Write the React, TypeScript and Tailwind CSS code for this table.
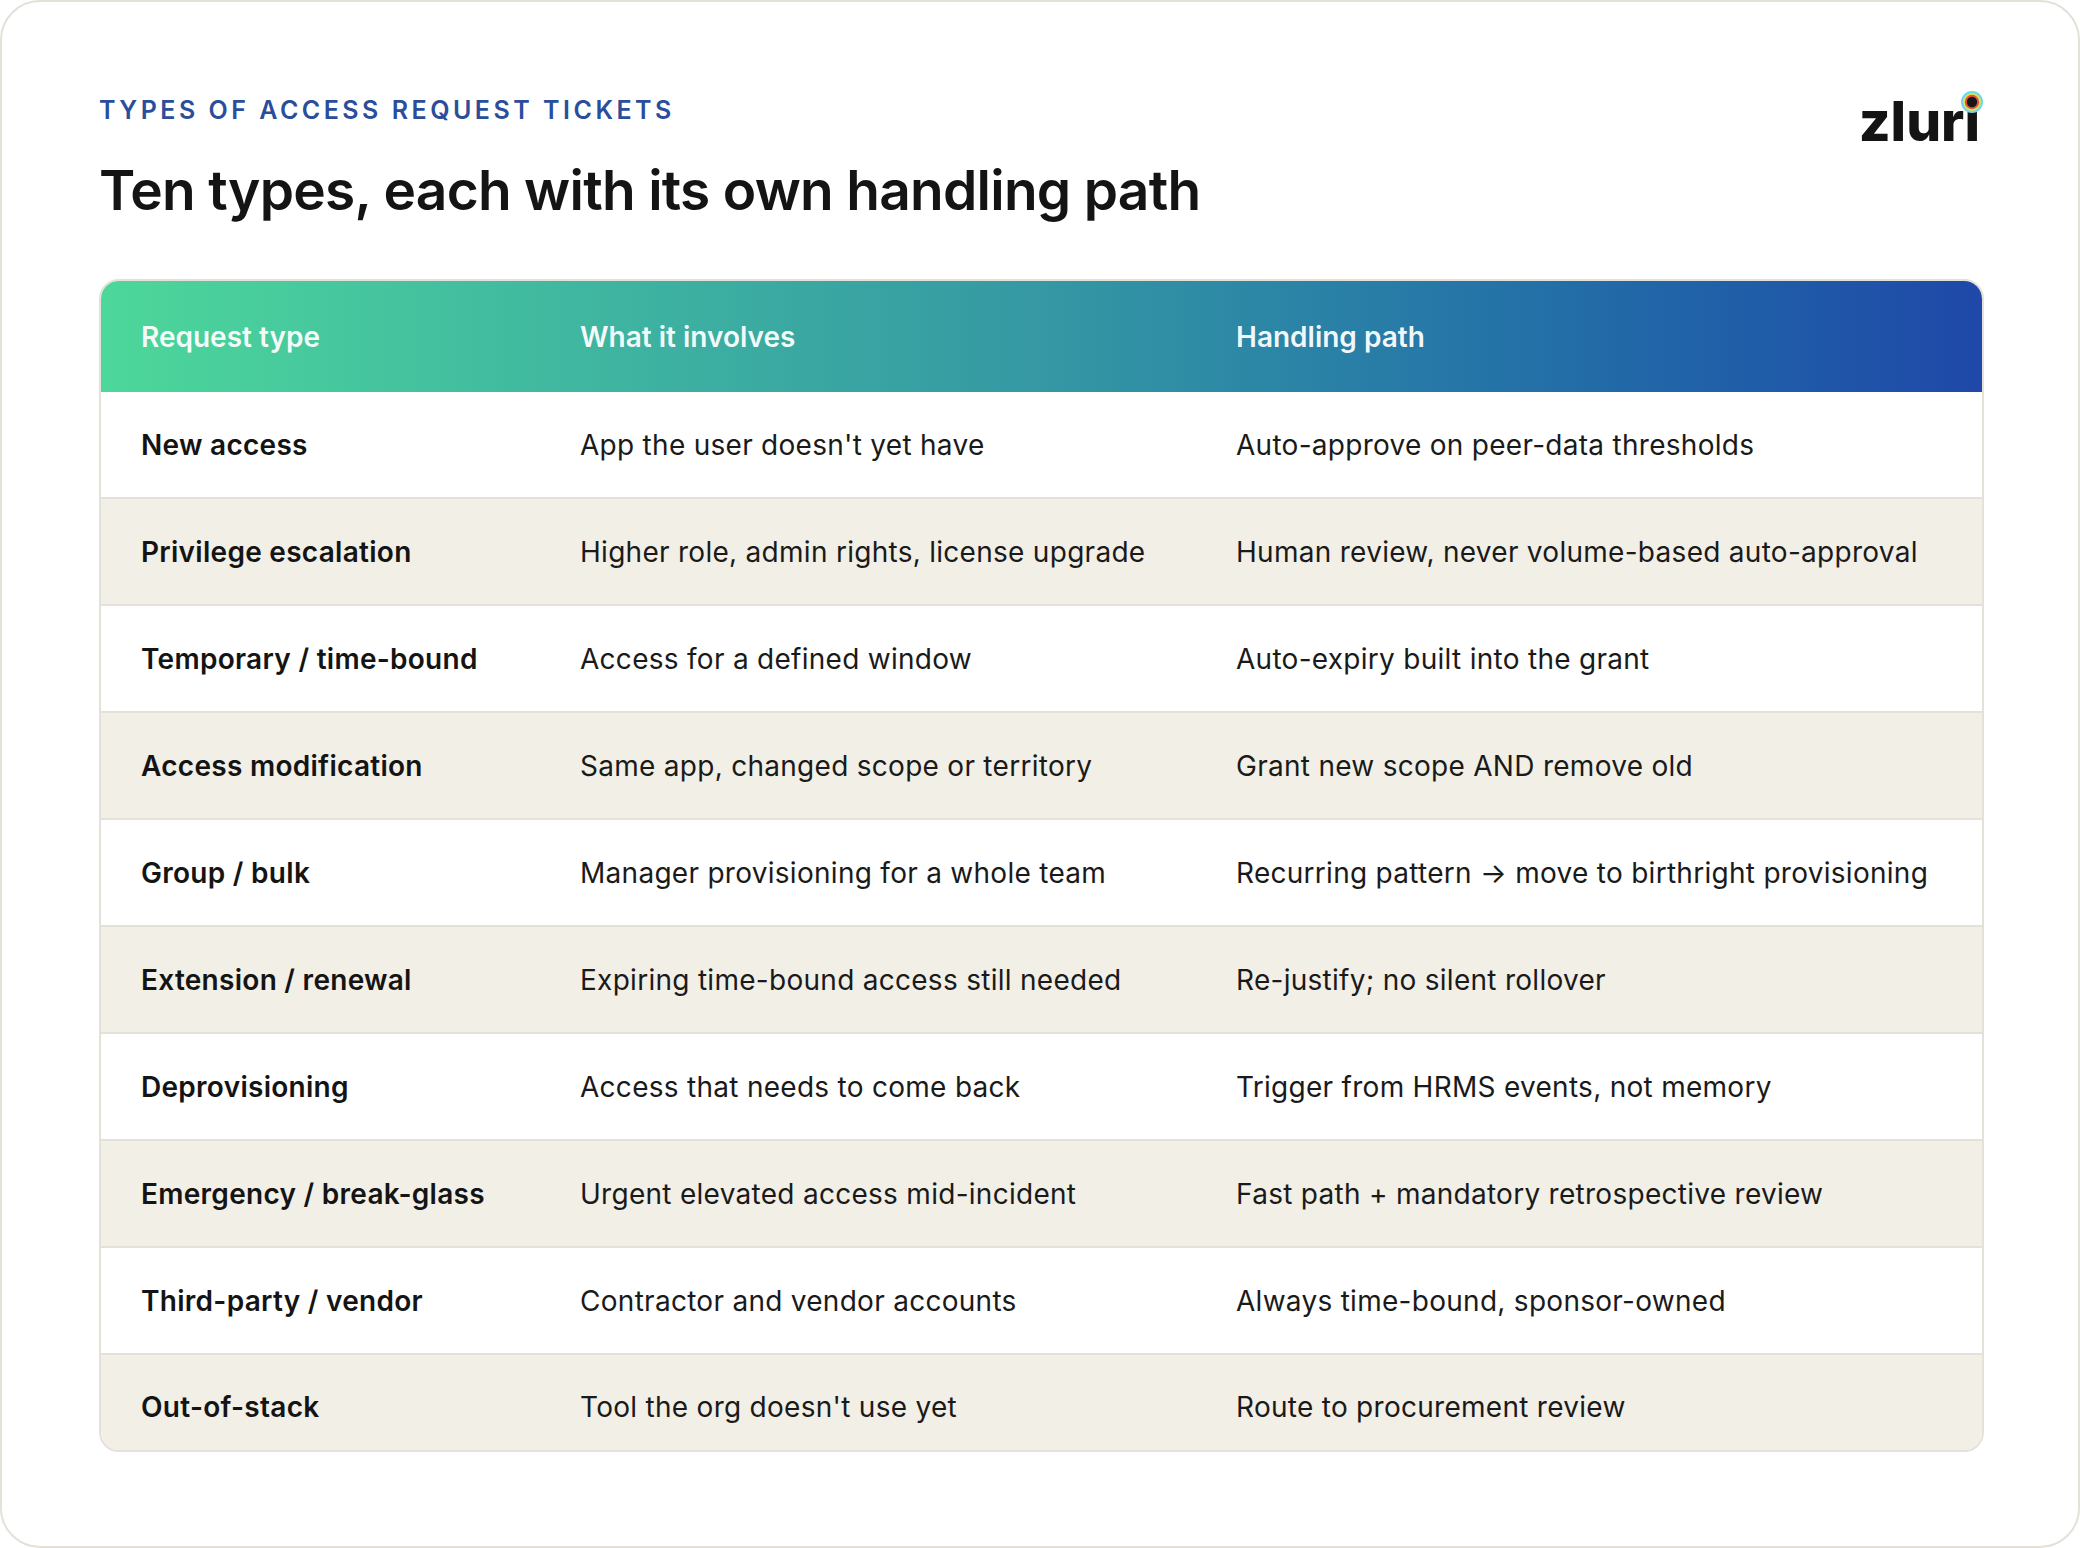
import React from "react";

const rows: [string, string, string][] = [
  ["New access", "App the user doesn't yet have", "Auto-approve on peer-data thresholds"],
  ["Privilege escalation", "Higher role, admin rights, license upgrade", "Human review, never volume-based auto-approval"],
  ["Temporary / time-bound", "Access for a defined window", "Auto-expiry built into the grant"],
  ["Access modification", "Same app, changed scope or territory", "Grant new scope AND remove old"],
  ["Group / bulk", "Manager provisioning for a whole team", "Recurring pattern \u2192 move to birthright provisioning"],
  ["Extension / renewal", "Expiring time-bound access still needed", "Re-justify; no silent rollover"],
  ["Deprovisioning", "Access that needs to come back", "Trigger from HRMS events, not memory"],
  ["Emergency / break-glass", "Urgent elevated access mid-incident", "Fast path + mandatory retrospective review"],
  ["Third-party / vendor", "Contractor and vendor accounts", "Always time-bound, sponsor-owned"],
  ["Out-of-stack", "Tool the org doesn't use yet", "Route to procurement review"],
];

function Logo() {
  return (
    <div className="relative mr-[4px] -mt-[4px] font-['Inter',sans-serif] text-[55px] font-extrabold leading-none tracking-normal text-[#141414]">
      <span>zlur</span>
      <span className="relative">
        {"\u0131"}
        <svg
          className="absolute left-1/2 top-[2px] -translate-x-1/2"
          width="24"
          height="24"
          viewBox="0 0 24 24"
        >
          <defs>
            <filter id="zsoft" x="-20%" y="-20%" width="140%" height="140%">
              <feGaussianBlur stdDeviation="0.45" />
            </filter>
          </defs>
          <g filter="url(#zsoft)">
            <circle cx="12" cy="12" r="11" fill="#71d5ee" />
            <circle cx="12" cy="12" r="9" fill="#cfe85c" />
            <circle cx="12" cy="12" r="7.2" fill="#ee4c3d" />
            <circle cx="12" cy="12" r="5.2" fill="#161616" />
          </g>
        </svg>
      </span>
    </div>
  );
}

export default function App() {
  return (
    <div className="h-[1548px] w-[2080px] bg-white font-['Inter',sans-serif]">
      <div className="flex h-full flex-col rounded-[40px] border-2 border-[#e4e1d9] bg-white pl-[97px] pr-[94px] pt-[96px]">
        <div className="flex items-start justify-between">
          <div className="flex flex-col">
            <div className="text-[25px] font-semibold uppercase leading-none tracking-[0.14em] text-[#2a4d9c]">
              Types of access request tickets
            </div>
            <h1 className="mt-[40px] text-[55px] font-semibold leading-none tracking-[-0.013em] text-[#141414]">
              Ten types, each with its own handling path
            </h1>
          </div>
          <Logo />
        </div>

        <div className="mt-[61px] overflow-hidden rounded-[20px] border-2 border-[#e4e1d9]">
          <div className="grid h-[111px] grid-cols-[439px_656px_1fr] items-center bg-linear-to-r from-[#4dd79a] via-[#3598a3] to-[#1f48a8] text-[28px] font-semibold text-white/95">
            <div className="pl-[40px]">Request type</div>
            <div className="pl-[40px]">What it involves</div>
            <div className="pl-[40px]">Handling path</div>
          </div>
          {rows.map((r, i) => {
            const last = i === rows.length - 1;
            return (
              <div
                key={r[0]}
                className={
                  "grid grid-cols-[439px_656px_1fr] items-center text-[28px] tracking-[0.01em] text-[#1a1a1a] " +
                  (i % 2 === 1 ? "bg-[#f2efe7] " : "bg-white ") +
                  (last ? "h-[95px] pt-[8px]" : "h-[107px] border-b-2 border-[#e4e1d9]")
                }
              >
                <div className="pl-[40px] font-semibold text-[#141414]">{r[0]}</div>
                <div className="pl-[40px]">{r[1]}</div>
                <div className="pl-[40px]">{r[2]}</div>
              </div>
            );
          })}
        </div>
      </div>
    </div>
  );
}
